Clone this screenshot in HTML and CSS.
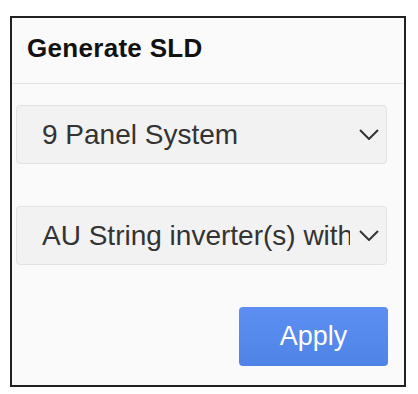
FILE: index.html
```html
<!DOCTYPE html>
<html lang="en">
<head>
    <meta charset="UTF-8">
    <title>Generate SLD</title>
    <link rel="stylesheet" href="styles.css">
</head>
<body>
    <div class="sld-panel">
        <div class="sld-header">
            <h1 class="sld-title">Generate SLD</h1>
        </div>
        <div class="sld-body">
            <div class="sld-select">
                <span class="sld-select-text">9 Panel System</span>
                <svg class="sld-chevron" width="20" height="11" viewBox="0 0 20 11"><path d="M1 1 L10 10 L19 1" fill="none" stroke="#333" stroke-width="2"/></svg>
            </div>
            <div class="sld-select">
                <span class="sld-select-text">AU String inverter(s) with battery</span>
                <svg class="sld-chevron" width="20" height="11" viewBox="0 0 20 11"><path d="M1 1 L10 10 L19 1" fill="none" stroke="#333" stroke-width="2"/></svg>
            </div>
            <div class="sld-actions">
                <button class="sld-apply" type="button">Apply</button>
            </div>
        </div>
    </div>
</body>
</html>
```

FILE: styles.css
```css
* {
    margin: 0;
    padding: 0;
    box-sizing: border-box;
}

body {
    font-family: "Liberation Sans", Arial, sans-serif;
    background: #fff;
    padding: 16px 0 0 10px;
}

.sld-panel {
    width: 396px;
    height: 371px;
    border: 2px solid #222;
    background: #fafafa;
}

.sld-header {
    height: 66px;
    border-bottom: 1px solid #e3e3e3;
    padding: 15px 0 0 15px;
}

.sld-title {
    font-size: 26px;
    font-weight: bold;
    color: #111;
    line-height: 30px;
    letter-spacing: 0.3px;
}

.sld-body {
    padding: 21px 17px 0 4px;
}

.sld-select {
    display: flex;
    align-items: center;
    height: 59px;
    background: #f2f2f2;
    border: 1px solid #e2e2e2;
    border-radius: 4px;
    padding: 0 7px 0 25px;
    margin-bottom: 42px;
}

.sld-select-text {
    flex: 1;
    min-width: 0;
    white-space: nowrap;
    overflow: hidden;
    font-size: 28px;
    color: #333;
    margin-right: 9px;
}

.sld-chevron {
    flex-shrink: 0;
}

.sld-actions {
    display: flex;
    justify-content: flex-end;
}

.sld-apply {
    width: 149px;
    height: 59px;
    margin-right: -1px;
    border: none;
    border-radius: 4px;
    background: linear-gradient(180deg, #5c8ff1 0%, #4f84e6 100%);
    color: #fff;
    font-family: "Liberation Sans", Arial, sans-serif;
    font-size: 27px;
}
```
